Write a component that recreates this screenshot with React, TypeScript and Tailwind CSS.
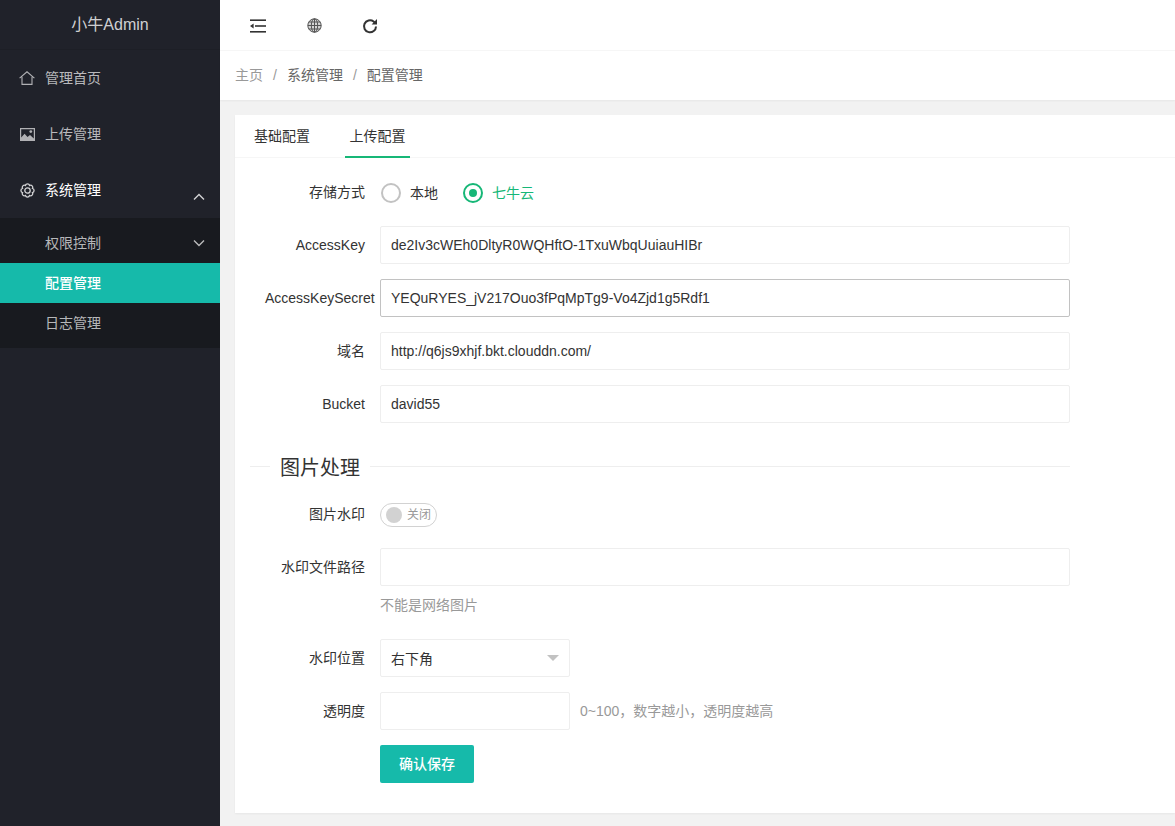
import React from "react";

const font = { fontFamily: '"Liberation Sans", "Noto Sans CJK SC", sans-serif' };

function Label({ children }: { children: React.ReactNode }) {
  return <div className="w-[130px] shrink-0 px-[15px] text-right leading-[38px] whitespace-nowrap">{children}</div>;
}

function TextInput({ value, focus, narrow }: { value?: string; focus?: boolean; narrow?: boolean }) {
  return (
    <div
      className={`h-[38px] ${narrow ? "w-[190px]" : "w-[690px]"} border rounded-[2px] pl-[10px] leading-[36px] text-[#333] bg-white whitespace-nowrap ${
        focus ? "border-[#c2c2c2]" : "border-[#eeeeee]"
      }`}
    >
      {value}
    </div>
  );
}

function Chevron({ up, className }: { up?: boolean; className?: string }) {
  return (
    <svg width="12" height="8" viewBox="0 0 12 8" fill="none" stroke="currentColor" strokeWidth="1.4" className={className}>
      {up ? <path d="M1 6.5L6 1.5L11 6.5" /> : <path d="M1 1.5L6 6.5L11 1.5" />}
    </svg>
  );
}

function NavItem({ icon, label, white, chevron }: { icon: React.ReactNode; label: string; white?: boolean; chevron?: boolean }) {
  return (
    <div className={`h-[56px] flex items-center pl-[19px] pr-[15px] ${white ? "text-white" : "text-[#ffffffb3]"}`}>
      <span className={`w-[16px] h-[15px] flex items-center justify-center mr-[10px] ${white ? "text-[#ffffffcc]" : "text-[#ffffffa6]"}`}>{icon}</span>
      <span className="text-[14px]">{label}</span>
      {chevron && <Chevron up className="ml-auto mt-[14px] text-[#ffffffcc]" />}
    </div>
  );
}

const gearPath = (() => {
  const pts = Array.from({ length: 8 }, (_, i) => {
    const a = ((i * 45 + 22.5) * Math.PI) / 180;
    return [7.5 + 5.4 * Math.cos(a), 7.5 + 5.4 * Math.sin(a)].map((n) => n.toFixed(2)).join(" ");
  });
  return `M${pts[0]} ` + pts.slice(1).concat(pts[0]).map((p) => `A2.15 2.15 0 0 1 ${p}`).join(" ") + "Z";
})();

export default function App() {
  return (
    <div className="flex h-[826px] w-[1175px] overflow-hidden text-[14px] text-[#333] bg-[#f2f2f2]" style={font}>
      <aside className="w-[220px] shrink-0 bg-[#20222a]">
        <div className="h-[50px] flex items-center justify-center text-[16px] text-[#ffffffcc] border-b border-[#1d1f26]">小牛Admin</div>
        <NavItem
          label="管理首页"
          icon={
            <svg width="16" height="14" viewBox="0 0 16 14" fill="none" stroke="currentColor" strokeWidth="1.1">
              <path d="M0.6 7.2L8 0.8L15.4 7.2" />
              <path d="M3 5.8V13.4H13V5.8" />
            </svg>
          }
        />
        <NavItem
          label="上传管理"
          icon={
            <svg width="15" height="13" viewBox="0 0 15 13" fill="currentColor">
              <path fillRule="evenodd" d="M0 0H15V13H0ZM1.2 1.2V9.5L4.6 5.8L7.5 9L10 7L13.8 10.4V1.2Z" />
              <circle cx="10.8" cy="3.6" r="1.4" />
            </svg>
          }
        />
        <NavItem
          white
          chevron
          label="系统管理"
          icon={
            <svg width="15" height="15" viewBox="0 0 15 15" fill="none" stroke="currentColor" strokeWidth="1.3" className="overflow-visible">
              <circle cx="7.5" cy="7.5" r="2.7" />
              <path d={gearPath} />
            </svg>
          }
        />
        <div className="bg-[#181a1f] py-[5px] h-[130px]">
          <div className="h-[40px] flex items-center pl-[45px] pr-[15px] text-[#ffffffb3]">
            权限控制
            <Chevron className="ml-auto text-[#ffffffb3]" />
          </div>
          <div className="h-[40px] flex items-center pl-[45px] bg-[#16baaa] text-white font-medium">配置管理</div>
          <div className="h-[40px] flex items-center pl-[45px] text-[#ffffffb3]">日志管理</div>
        </div>
      </aside>

      <main className="flex-1 min-w-0 flex flex-col">
        <header className="h-[51px] shrink-0 bg-white border-b border-[#f6f6f6] flex items-center pl-[30px] pt-[1px] gap-[41px] text-[#333]">
          <svg width="16" height="14" viewBox="0 0 16 14" fill="currentColor">
            <rect x="0" y="0.4" width="16" height="1.6" />
            <rect x="5" y="6.2" width="11" height="1.6" />
            <rect x="0" y="12" width="16" height="1.6" />
            <path d="M0 7L3.6 4.6V9.4Z" />
          </svg>
          <svg width="15" height="15" viewBox="0 0 15 15" fill="none" stroke="#555" strokeWidth="1">
            <circle cx="7.5" cy="7.5" r="6.7" fill="#8a8a8a" fillOpacity="0.35" />
            <ellipse cx="7.5" cy="7.5" rx="3.2" ry="6.7" />
            <path d="M7.5 .8V14.2M.8 7.5H14.2M1.8 4H13.2M1.8 11H13.2" />
          </svg>
          <svg width="16" height="16" viewBox="0 0 16 16" fill="none" stroke="#333" strokeWidth="2" className="-ml-[1px]">
            <path d="M14 8.4A6 6 0 1 1 11.6 3.5L13.6 5.2" />
            <path d="M15 1V6.4H9.6Z" strokeWidth="0" fill="#333" />
          </svg>
        </header>
        <div className="h-[49px] shrink-0 bg-white flex items-center pl-[15px] shadow-[0_1px_2px_0_rgba(0,0,0,0.05)] text-[#666]">
          <span className="text-[#999]">主页</span>
          <span className="mx-[10px] text-[#999]">/</span>
          <span>系统管理</span>
          <span className="mx-[10px] text-[#999]">/</span>
          <span>配置管理</span>
        </div>

        <section className="mt-[15px] ml-[15px] h-[698px] bg-white shadow-[0_1px_2px_0_rgba(0,0,0,0.05)]">
          <div className="h-[43px] border-b border-[#f6f6f6] flex pl-[4px] whitespace-nowrap">
            <div className="h-[43px] px-[15px] leading-[42px] text-[#333]">基础配置</div>
            <div className="h-[43px] ml-[20px] w-[65px] text-center leading-[42px] border-b-2 border-[#16b777] text-[#333]">上传配置</div>
          </div>

          <div className="pt-[15px] pl-[15px] flex flex-col gap-[15px]">
            <div className="flex h-[38px] items-center">
              <Label>存储方式</Label>
              <div className="flex items-center mt-[2px]">
                <span className="w-[20px] h-[20px] ml-[1px] rounded-full border-2 border-[#c2c2c2] bg-white" />
                <span className="ml-[9px]">本地</span>
                <span className="ml-[25px] w-[20px] h-[20px] rounded-full border-2 border-[#16b777] flex items-center justify-center">
                  <span className="w-[8px] h-[8px] rounded-full bg-[#16b777]" />
                </span>
                <span className="ml-[9px] text-[#16b777]">七牛云</span>
              </div>
            </div>
            <div className="flex"><Label>AccessKey</Label><TextInput value="de2Iv3cWEh0DltyR0WQHftO-1TxuWbqUuiauHIBr" /></div>
            <div className="flex"><Label>AccessKeySecret</Label><TextInput focus value="YEQuRYES_jV217Ouo3fPqMpTg9-Vo4Zjd1g5Rdf1" /></div>
            <div className="flex"><Label>域名</Label><TextInput value="http://q6js9xhjf.bkt.clouddn.com/" /></div>
            <div className="flex"><Label>Bucket</Label><TextInput value="david55" /></div>
          </div>

          <div className="mt-[31px] mb-[17px] ml-[15px] w-[820px] flex items-center h-[24px]">
            <span className="w-[20px] h-px bg-[#eeeeee]" />
            <span className="px-[10px] pt-[4px] text-[20px] text-[#333] leading-[24px]">图片处理</span>
            <span className="flex-1 h-px bg-[#eeeeee]" />
          </div>

          <div className="pl-[15px] flex flex-col gap-[15px]">
            <div className="flex h-[38px] items-center">
              <Label>图片水印</Label>
              <div className="mt-[2px] w-[57px] h-[24px] rounded-[20px] border border-[#d2d2d2] bg-white flex items-center pl-[5px]">
                <span className="w-[16px] h-[16px] rounded-full bg-[#d2d2d2]" />
                <span className="ml-[5px] text-[12px] text-[#999]">关闭</span>
              </div>
            </div>
            <div>
              <div className="flex"><Label>水印文件路径</Label><TextInput /></div>
              <div className="ml-[130px] mt-[9px] h-[20px] leading-[20px] text-[#999]">不能是网络图片</div>
              <div className="h-[9px]" />
            </div>
            <div className="flex">
              <Label>水印位置</Label>
              <div className="relative h-[38px] w-[190px] border border-[#eeeeee] rounded-[2px] pl-[10px] leading-[38px] text-[#333]">
                右下角
                <span className="absolute right-[10px] top-[15px] w-0 h-0 border-x-[6px] border-x-transparent border-t-[6px] border-t-[#c2c2c2]" />
              </div>
            </div>
            <div className="flex items-center">
              <Label>透明度</Label>
              <TextInput narrow />
              <span className="ml-[10px] text-[#999]">0~100，数字越小，透明度越高</span>
            </div>
            <div className="ml-[130px]">
              <div className="h-[38px] w-[94px] rounded-[2px] bg-[#16baaa] text-white text-center leading-[38px] font-medium">确认保存</div>
            </div>
          </div>
        </section>
      </main>
    </div>
  );
}
